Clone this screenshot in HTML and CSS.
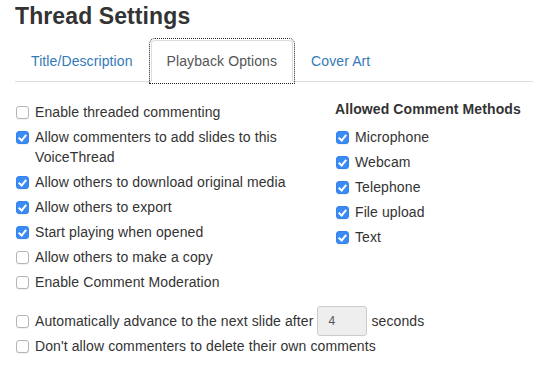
FILE: index.html
```html
<!DOCTYPE html>
<html lang="en">

<head>
	<meta charset="UTF-8">
	<meta name="viewport" content="width=device-width, initial-scale=1.0">
	<title>Thread Settings</title>
	<link rel="stylesheet" href="styles.css">
</head>

<body>
	<div class="container">
		<h2>Thread Settings</h2>

		<ul class="nav-tabs">
			<li><a href="#">Title/Description</a></li>
			<li class="active"><a href="#">Playback Options</a></li>
			<li><a href="#">Cover Art</a></li>
		</ul>

		<div class="options">
			<div class="general">
				<label class="check"><input type="checkbox"><span>Enable threaded commenting</span></label>
				<label class="check"><input type="checkbox" checked><span>Allow commenters to add slides to this VoiceThread</span></label>
				<label class="check"><input type="checkbox" checked><span>Allow others to download original media</span></label>
				<label class="check"><input type="checkbox" checked><span>Allow others to export</span></label>
				<label class="check"><input type="checkbox" checked><span>Start playing when opened</span></label>
				<label class="check"><input type="checkbox"><span>Allow others to make a copy</span></label>
				<label class="check"><input type="checkbox"><span>Enable Comment Moderation</span></label>
			</div>

			<div class="methods">
				<div class="methods-title">Allowed Comment Methods</div>
				<label class="check"><input type="checkbox" checked><span>Microphone</span></label>
				<label class="check"><input type="checkbox" checked><span>Webcam</span></label>
				<label class="check"><input type="checkbox" checked><span>Telephone</span></label>
				<label class="check"><input type="checkbox" checked><span>File upload</span></label>
				<label class="check"><input type="checkbox" checked><span>Text</span></label>
			</div>
		</div>

		<div class="extra">
			<label class="check">
				<input type="checkbox">
				<span class="advance">Automatically advance to the next slide after<input type="text" class="seconds" value="4" disabled>seconds</span>
			</label>
			<label class="check"><input type="checkbox"><span>Don't allow commenters to delete their own comments</span></label>
		</div>
	</div>
</body>

</html>
```

FILE: styles.css
```css
* {
	box-sizing: border-box;
}

body {
	font-family: 'Liberation Sans', Arial, sans-serif;
	font-size: 14px;
	line-height: 20px;
	letter-spacing: 0.1px;
	color: #333;
	background-color: #fff;
	margin: 0;
}

.container {
	padding: 0 7px 0 15px;
}

h2 {
	font-size: 23px;
	line-height: 1.1;
	font-weight: 700;
	letter-spacing: 0.1px;
	color: #333;
	margin: 4px 0 11px;
}

.nav-tabs {
	display: flex;
	list-style: none;
	margin: 0;
	padding: 0;
	border-bottom: 1px solid #ddd;
}

.nav-tabs li {
	margin-bottom: -1px;
}

.nav-tabs a {
	display: block;
	padding: 10px 15px;
	margin-right: 2px;
	line-height: 20px;
	color: #337ab7;
	text-decoration: none;
	border: 1px solid transparent;
	border-radius: 4px 4px 0 0;
}

.nav-tabs .active a {
	color: #555;
	background-color: #fff;
	border-color: #ddd #ddd transparent;
	outline: 1px dotted #222;
	outline-offset: 1px;
}

.options {
	display: flex;
	gap: 20px;
	margin-top: 17px;
}

.general {
	flex: 0 0 300px;
	display: flex;
	flex-direction: column;
	gap: 5px;
	padding-top: 3px;
}

.methods {
	display: flex;
	flex-direction: column;
	gap: 5px;
}

.methods-title {
	font-weight: 700;
	margin-bottom: 3px;
}

.check {
	display: flex;
	align-items: flex-start;
	gap: 6px;
	cursor: pointer;
}

.check input[type="checkbox"] {
	appearance: none;
	-webkit-appearance: none;
	flex: 0 0 13px;
	width: 13px;
	height: 13px;
	margin: 4px 0 0 1px;
	border: 1px solid #b5b5b5;
	border-radius: 3px;
	background-color: #fff;
	box-shadow: 0 1px 1px rgba(0, 0, 0, 0.06);
	position: relative;
}

.check input[type="checkbox"]:checked {
	background-color: #3a8bf5;
	border-color: #3483ee;
}

.check input[type="checkbox"]:checked::after {
	content: '';
	position: absolute;
	left: 3px;
	top: 1px;
	width: 3px;
	height: 6px;
	border: solid #fff;
	border-width: 0 2px 2px 0;
	transform: rotate(40deg);
}

.extra {
	display: flex;
	flex-direction: column;
	gap: 5px;
	margin-top: 19px;
}

.advance {
	display: flex;
	align-items: center;
	height: 20px;
}

.seconds {
	width: 50px;
	height: 30px;
	margin: -5px 4px;
	padding: 5px 10px;
	font-family: 'Liberation Sans', Arial, sans-serif;
	font-size: 12px;
	color: #555;
	background-color: #eee;
	border: 1px solid #ccc;
	border-radius: 3px;
}
```
